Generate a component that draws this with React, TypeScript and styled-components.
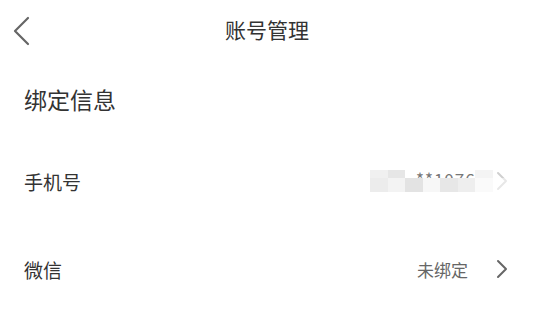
import React from 'react';
import styled, { createGlobalStyle } from 'styled-components';

const GlobalStyle = createGlobalStyle`
  html, body {
    margin: 0;
    padding: 0;
    background: #fff;
  }
  body {
    font-family: "Noto Sans CJK SC", "Noto Sans", sans-serif;
    color: #333;
  }
`;

const Page = styled.div`
  width: 534px;
  height: 319px;
  background: #fff;
  display: flex;
  flex-direction: column;
  overflow: hidden;
`;

const NavBar = styled.div`
  height: 58px;
  display: grid;
  grid-template-columns: 60px 1fr 60px;
  align-items: center;
`;

const BackButton = styled.div`
  display: flex;
  align-items: center;
  padding-left: 12px;
  padding-top: 4px;
  height: 100%;
`;

const Title = styled.div`
  text-align: center;
  font-size: 21px;
  color: #333;
  line-height: 1;
`;

const SectionTitle = styled.div`
  padding: 27px 24px 0;
  font-size: 23px;
  line-height: 28px;
  color: #333;
`;

const List = styled.div`
  display: flex;
  flex-direction: column;
  margin-top: 24px;
`;

const Row = styled.div`
  height: 88px;
  padding: 0 26px 0 24px;
  display: flex;
  align-items: center;
  justify-content: space-between;
`;

const Label = styled.span`
  font-size: 19px;
  color: #333;
`;

const Right = styled.div<{ $gap: number }>`
  display: flex;
  align-items: center;
  gap: ${(p) => p.$gap}px;
`;

const Value = styled.span`
  font-size: 17px;
  color: #666;
`;

const Masked = styled.div`
  position: relative;
  width: 140px;
  height: 22px;
  margin-right: -14px;
`;

const MaskedText = styled.span`
  position: absolute;
  left: 46px;
  top: 0;
  font-size: 17px;
  line-height: 17px;
  color: #777;
  letter-spacing: 1px;
`;

const Mosaic = styled.div`
  position: absolute;
  inset: 0;
  display: grid;
  grid-template-columns: repeat(8, 1fr);
  grid-template-rows: 8px 14px;
`;

const Cell = styled.div<{ $shade: string }>`
  background: ${(p) => p.$shade};
`;

const Chevron = ({ color = '#666' }: { color?: string }) => (
  <svg width="12" height="20" viewBox="0 0 12 20" fill="none">
    <path d="M2 2 L10 10 L2 18" stroke={color} strokeWidth="2" strokeLinecap="round" strokeLinejoin="round" />
  </svg>
);

// top row stays see-through in the middle so the tail of the number peeks out
const shades = [
  '#f0f0f0', '#e6e6e6', 'transparent', 'transparent', 'transparent', 'transparent', '#f4f4f4', 'rgba(255,255,255,0.6)',
  '#ececec', '#f3f3f3', '#e3e3e3', '#f7f7f7', '#e7e7e7', '#eeeeee', '#fafafa', 'rgba(255,255,255,0.8)',
];

const App: React.FC = () => (
  <Page>
    <GlobalStyle />
    <NavBar>
      <BackButton>
        <svg width="20" height="30" viewBox="0 0 20 30" fill="none">
          <path d="M16 2 L3 15 L16 28" stroke="#666" strokeWidth="2.2" strokeLinecap="round" strokeLinejoin="round" />
        </svg>
      </BackButton>
      <Title>账号管理</Title>
      <div />
    </NavBar>
    <SectionTitle>绑定信息</SectionTitle>
    <List>
      <Row>
        <Label>手机号</Label>
        <Right $gap={0}>
          <Masked>
            <MaskedText>**1076</MaskedText>
            <Mosaic>
              {shades.map((s, i) => (
                <Cell key={i} $shade={s} />
              ))}
            </Mosaic>
          </Masked>
          <Chevron color="#888" />
        </Right>
      </Row>
      <Row>
        <Label>微信</Label>
        <Right $gap={28}>
          <Value>未绑定</Value>
          <Chevron />
        </Right>
      </Row>
    </List>
  </Page>
);

export default App;
